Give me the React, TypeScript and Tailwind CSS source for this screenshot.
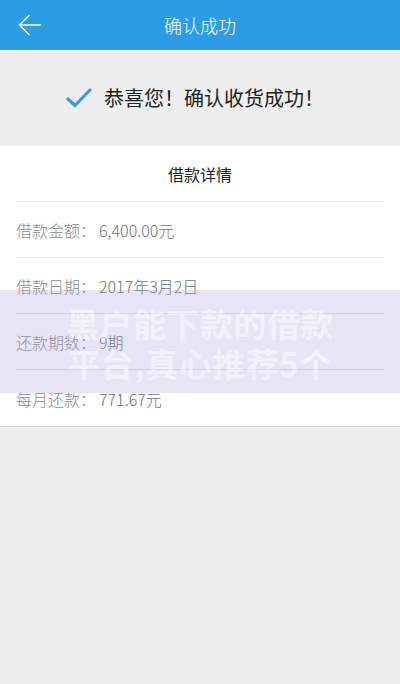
import React from 'react';

const details = [
  { label: '借款金额：', value: '6,400.00元' },
  { label: '借款日期：', value: '2017年3月2日' },
  { label: '还款期数：', value: '9期' },
  { label: '每月还款：', value: '771.67元' },
];

const font = { fontFamily: '"Noto Sans CJK SC", "Noto Sans", sans-serif' };

const App: React.FC = () => {
  return (
    <div className="relative w-[400px] h-[684px] bg-[#eeeeee] overflow-hidden" style={font}>
      {/* Header */}
      <div className="relative h-[50px] bg-[#2b9de7] flex items-center justify-center">
        <svg className="absolute left-[18px] top-[14px]" width="24" height="22" viewBox="0 0 24 22" fill="none">
          <path d="M11 1.5 L1.5 11 L11 20.5 M1.5 11 H22.5" stroke="#ffffff" strokeWidth="1.6" strokeLinecap="round" strokeLinejoin="round" />
        </svg>
        <span className="text-white text-[18px] font-light">确认成功</span>
      </div>

      {/* Success */}
      <div className="h-[96px] flex items-center justify-center gap-[12px] pr-[10px]">
        <svg width="26" height="20" viewBox="0 0 26 20" fill="none">
          <path d="M2 11 L9 17.5 L24 2" stroke="#3a9be0" strokeWidth="3.2" strokeLinecap="round" strokeLinejoin="round" />
        </svg>
        <span className="text-[20px] text-[#222]">恭喜您！确认收货成功！</span>
      </div>

      {/* Card */}
      <div className="bg-white border-b border-[#d6d6d6] px-4">
        <div className="h-[56px] flex items-center justify-center border-b border-[#e3e3e3] text-[16px] text-[#222]">
          借款详情
        </div>
        {details.map((d, i) => (
          <div
            key={i}
            className={`h-[56px] pt-[1px] flex items-center text-[16px] font-light ${i < details.length - 1 ? 'border-b border-[#e3e3e3]' : ''}`}
          >
            <span className="text-[#8a8a8a] w-[83px]">{d.label}</span>
            <span className="text-[#6f6f6f]">{d.value}</span>
          </div>
        ))}
      </div>

      {/* Watermark */}
      <div className="absolute left-0 top-[290px] w-[400px] h-[103px] pt-[2px] bg-[rgba(175,165,215,0.3)] flex flex-col items-center justify-center">
        <div className="text-[33px] font-bold leading-[40px] text-white/50 tracking-[0.5px]">黑户能下款的借款</div>
        <div className="text-[33px] font-bold leading-[40px] text-white/50 tracking-[0.5px]">平台,真心推荐5个</div>
      </div>
    </div>
  );
};

export default App;
